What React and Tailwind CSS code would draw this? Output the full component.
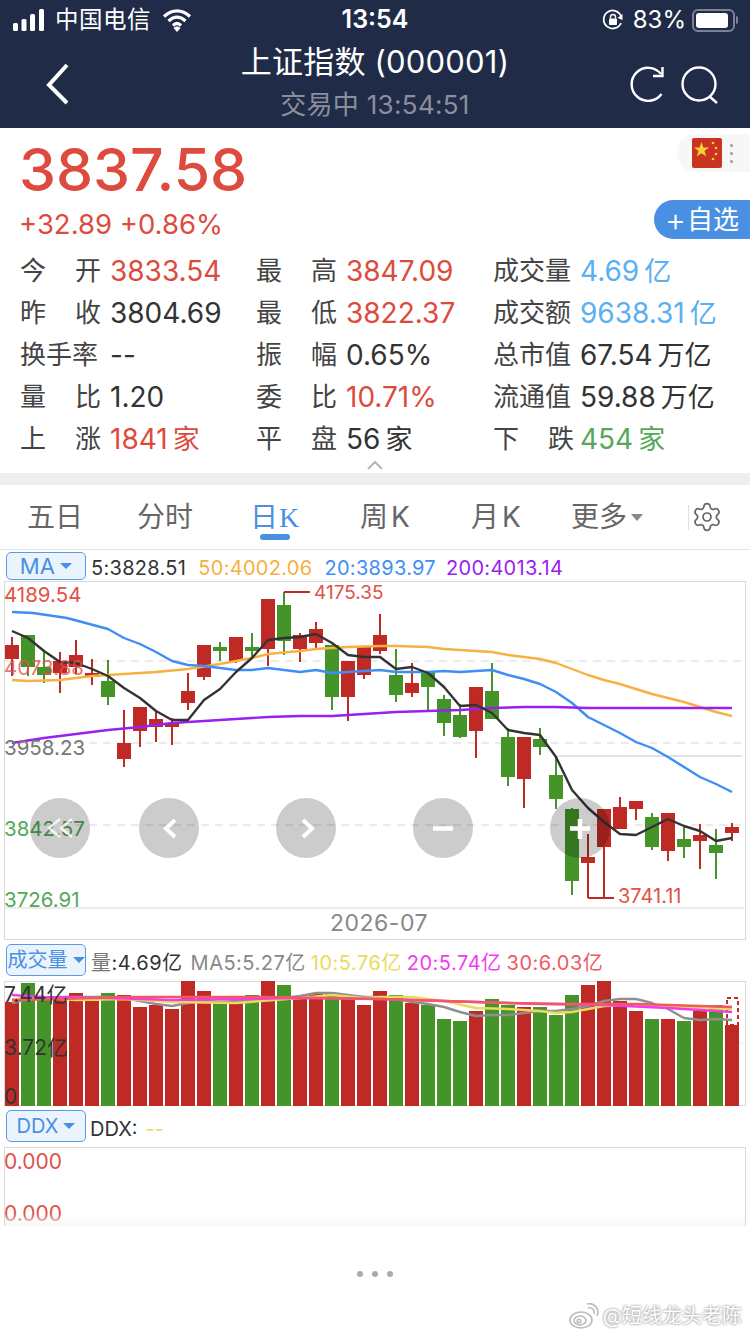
import { Settings } from 'lucide-react';

const RED = '#bf2a24';
const GREEN = '#45942a';

// [body top, body bottom, wick top, wick bottom, up?, volume bar top]
const candles = [
  [645, 659, 637, 676, 1, 1002], [635, 667, 635, 676, 0, 983], [667, 675, 650, 683, 0, 997],
  [661, 673, 652, 693, 1, 997], [655, 667, 640, 674, 1, 993], [673, 677, 659, 685, 1, 1001],
  [681, 697, 660, 705, 0, 993], [743, 759, 710, 767, 1, 995], [707, 731, 707, 747, 1, 1007],
  [719, 727, 711, 742, 1, 1005], [723, 727, 718, 745, 1, 1009], [691, 703, 673, 710, 1, 981],
  [645, 677, 645, 680, 1, 991], [647, 651, 642, 661, 0, 1002], [637, 661, 637, 663, 1, 1003],
  [647, 651, 633, 658, 0, 995], [599, 649, 599, 666, 1, 981], [605, 641, 592, 655, 0, 985],
  [635, 649, 633, 662, 1, 997], [629, 643, 622, 649, 1, 993], [645, 697, 645, 710, 0, 993],
  [661, 697, 661, 721, 1, 995], [647, 675, 647, 679, 1, 1005], [635, 651, 614, 654, 1, 991],
  [675, 695, 649, 702, 0, 995], [683, 693, 663, 697, 1, 1003], [671, 687, 671, 711, 0, 1005],
  [699, 723, 695, 736, 0, 1019], [715, 737, 704, 738, 0, 1021], [687, 731, 687, 758, 1, 1011],
  [691, 719, 663, 719, 0, 999], [737, 777, 728, 786, 0, 1005], [737, 779, 737, 808, 1, 1007],
  [739, 747, 728, 755, 0, 1007], [775, 799, 757, 809, 0, 1015], [809, 881, 808, 895, 0, 995],
  [857, 863, 834, 898, 1, 985], [809, 847, 809, 897, 1, 981], [807, 829, 797, 829, 1, 1001],
  [801, 809, 801, 820, 1, 1011], [817, 847, 813, 850, 0, 1019], [813, 851, 813, 861, 1, 1019],
  [839, 847, 825, 858, 0, 1021], [835, 841, 824, 869, 1, 1011], [845, 853, 829, 879, 0, 1005],
  [827, 833, 823, 841, 1, 1025],
];

const ma5 = '12,631 28,638 44,651 60,662 76,663 92,669 108,676 124,688 140,698 156,711 172,720 188,720 204,700 220,689 236,672 252,658 268,640 284,638 300,637 316,634 332,643 348,655 364,657 380,657 396,669 412,667 428,673 444,687 460,706 476,705 492,713 508,730 524,733 540,735 556,757 572,790 588,808 604,822 620,834 636,835 652,827 668,819 684,826 700,831 716,841 732,838';
const ma20 = '12,612 33,613 67,618 108,629 124,638 140,644 156,652 172,661 188,665 204,666 220,668 236,670 252,670 268,668 284,670 300,672 316,670 332,673 348,672 364,671 380,670 396,672 412,672 428,672 444,671 460,672 476,671 492,670 508,675 524,679 540,684 556,692 572,703 588,717 604,725 620,733 636,742 652,748 668,757 684,767 700,777 716,784 732,792';
const ma50 = '12,680 28,681 60,680 92,676 124,674 156,672 188,669 220,664 252,658 268,654 300,651 316,649 348,647 380,646 396,646 428,647 444,649 460,650 492,652 508,655 540,659 556,663 572,669 588,675 604,680 620,684 652,694 668,698 684,702 700,707 716,712 732,716';
const ma200 = '12,743 44,738 76,734 108,730 140,727 172,723 204,721 236,719 268,717 300,716 332,716 364,714 396,712 428,711 460,710 492,708 524,707 556,707 588,708 620,708 732,708';

const volGray = '12,1003 28,999 44,999 60,997 76,997 92,997 108,997 124,998 140,1001 156,1004 172,1006 188,1003 204,1001 220,1002 236,1001 252,1000 268,1000 284,998 300,996 316,993 332,993 348,995 364,997 380,997 396,999 412,1002 428,1004 444,1007 460,1012 476,1016 492,1015 508,1015 524,1013 540,1011 556,1011 572,1009 588,1006 604,1001 620,999 636,999 652,1003 668,1009 684,1018 700,1020 716,1019 732,1020';
const volYellow = '12,999 44,998 76,1000 124,999 172,1002 236,1003 300,998 332,995 364,998 380,997 412,997 444,1001 476,1008 508,1009 540,1011 556,1013 572,1012 604,1006 636,1005 668,1007 732,1009';
const volPink = '12,995 44,997 108,998 172,1000 236,999 300,998 380,999 412,1000 476,1002 540,1004 604,1005 668,1008 732,1012';
const volSalmon = '12,1000 60,999 124,997 204,997 268,997 380,999 444,1001 508,1003 572,1004 636,1004 700,1006 732,1007';

const stats = [
  [['今', '开'], '3833.54', '', 'text-[#dd4b3e]'],
  [['最', '高'], '3847.09', '', 'text-[#dd4b3e]'],
  [['成交量'], '4.69', '亿', 'text-[#5ab0f0]'],
  [['昨', '收'], '3804.69', '', 'text-[#333]'],
  [['最', '低'], '3822.37', '', 'text-[#dd4b3e]'],
  [['成交额'], '9638.31', '亿', 'text-[#5ab0f0]'],
  [['换手率'], '--', '', 'text-[#333]'],
  [['振', '幅'], '0.65%', '', 'text-[#333]'],
  [['总市值'], '67.54', '万亿', 'text-[#333]'],
  [['量', '比'], '1.20', '', 'text-[#333]'],
  [['委', '比'], '10.71%', '', 'text-[#dd4b3e]'],
  [['流通值'], '59.88', '万亿', 'text-[#333]'],
  [['上', '涨'], '1841', '家', 'text-[#dd4b3e]'],
  [['平', '盘'], '56', '家', 'text-[#333]'],
  [['下', '跌'], '454', '家', 'text-[#55a85a]'],
];

const Line = ({ points, color, width = 2.4 }) => (
  <polyline points={points} fill="none" stroke={color} strokeWidth={width} strokeLinejoin="round" />
);

const IndicatorButton = ({ label, textClass, heightClass }) => (
  <div className={`w-[80px] shrink-0 ${heightClass} flex items-center justify-center gap-[5px] border border-[#5a9be8] rounded-[5px] bg-[#ebf3fc] text-[#4a90e2]`}>
    <span className={textClass}>{label}</span>
    <span className="w-0 h-0 border-x-[6px] border-x-transparent border-t-[6px] border-t-[#4a90e2]" />
  </div>
);

const OverlayButton = ({ position, children }) => (
  <div className={`absolute ${position} top-[216px] w-[60px] h-[60px] rounded-full bg-[rgba(0,0,0,0.2)]`}>
    <svg width="60" height="60" viewBox="0 0 60 60" fill="none" stroke="#fff" strokeLinecap="butt">
      {children}
    </svg>
  </div>
);

export default function App() {
  return (
    <div className="w-[750px] h-[1334px] overflow-hidden bg-white font-['Inter','Noto_Sans_CJK_SC',sans-serif]">
      <header className="h-[128px] bg-[#1f2b47] text-white">
        <div className="relative h-[40px] flex items-center pl-[13px] pr-[12px]">
          <svg width="33" height="22" viewBox="0 0 33 22" fill="#fff">
            <rect x="0" y="14" width="5" height="8" rx="1.5" />
            <rect x="8.5" y="10" width="5" height="12" rx="1.5" />
            <rect x="17" y="5" width="5" height="17" rx="1.5" />
            <rect x="26" y="0" width="5" height="22" rx="1.5" />
          </svg>
          <span className="ml-[9px] text-[23.5px] tracking-[0.5px]">中国电信</span>
          <svg className="ml-[11px]" width="30" height="24" viewBox="0 0 30 24" fill="none" stroke="#fff" strokeWidth="3.2">
            <path d="M2 8.5 C10 1 20 1 28 8.5" />
            <path d="M6.5 13 C12 8 18 8 23.5 13" />
            <path d="M11 17.5 C13.5 15 16.5 15 19 17.5" />
            <path d="M15 24 L11.5 20 C13.5 18 16.5 18 18.5 20 Z" fill="#fff" stroke="none" />
          </svg>
          <span className="absolute left-0 right-0 text-center text-[25px] font-semibold">13:54</span>
          <svg className="ml-auto" width="22" height="22" viewBox="0 0 22 22" fill="none" stroke="#fff" strokeWidth="1.8">
            <path d="M19 14 A9 9 0 1 1 19 7" />
            <path d="M20.5 5 L20.5 11 L15.5 9 Z" fill="#fff" stroke="none" />
            <rect x="7" y="9.5" width="8" height="6.5" rx="1" fill="#fff" stroke="none" />
            <path d="M8.5 9.5 V8 a2.5 2.5 0 0 1 5 0 V9.5" strokeWidth="1.4" />
          </svg>
          <span className="ml-[9px] text-[24px]">83%</span>
          <div className="ml-[6px] w-[43px] h-[23px] border-2 border-[#7a8296] rounded-[6px] p-[2px]">
            <div className="w-[32px] h-full bg-white rounded-[3px]" />
          </div>
          <div className="ml-[1px] w-[2px] h-[8px] bg-[#7a8296] rounded-r" />
        </div>
        <div className="relative h-[88px] text-center">
          <div className="pt-[2px] text-[31px] leading-[40px] tracking-[0.2px]">上证指数 (000001)</div>
          <div className="mt-[5px] text-[26px] leading-[36px] tracking-[0.3px] text-[#8b8f9b]">交易中 13:54:51</div>
          <svg className="absolute left-[42px] top-[20px]" width="30" height="46" viewBox="0 0 30 46" fill="none" stroke="#fff" strokeWidth="4">
            <path d="M25 5 L7 25 L25 43" />
          </svg>
          <svg className="absolute left-[629px] top-[26px]" width="36" height="38" viewBox="0 0 36 38" fill="none" stroke="#fff" strokeWidth="2.4">
            <path d="M32 8 A16.5 16.5 0 1 0 32.5 28" />
            <path d="M33.5 1 V10 H24" />
          </svg>
          <svg className="absolute left-[681px] top-[26px]" width="38" height="38" viewBox="0 0 38 38" fill="none" stroke="#fff" strokeWidth="2.4">
            <circle cx="18" cy="18" r="16.5" />
            <path d="M28 30 L36 37" />
          </svg>
        </div>
      </header>

      <section className="relative h-[122px] pl-[19px] text-[#dd4b3e]">
        <div className="pt-[12px] text-[59px] leading-[60px] font-medium">3837.58</div>
        <div className="mt-[2px] text-[27.5px] leading-[44px]">+32.89 +0.86%</div>
        <div className="absolute right-0 top-[6px] w-[73px] h-[38px] flex items-center gap-[4px] pl-[15px] rounded-l-[19px] bg-[#f7f7f7]">
          <svg width="30" height="30" viewBox="0 0 30 30">
            <rect width="30" height="30" rx="2" fill="#c9331f" />
            <path d="M9.5 4 L11.4 9.6 L17 9.6 L12.4 13 L14.2 18.6 L9.5 15.2 L4.8 18.6 L6.6 13 L2 9.6 L7.6 9.6 Z" fill="#f7d038" />
            <circle cx="21" cy="5" r="1.3" fill="#f7d038" />
            <circle cx="24" cy="10" r="1.3" fill="#f7d038" />
            <circle cx="24" cy="16" r="1.3" fill="#f7d038" />
            <circle cx="21" cy="21" r="1.3" fill="#f7d038" />
          </svg>
          <div className="ml-[4px] flex flex-col gap-[5px]">
            <span className="w-[3px] h-[3px] rounded-full bg-[#999]" />
            <span className="w-[3px] h-[3px] rounded-full bg-[#999]" />
            <span className="w-[3px] h-[3px] rounded-full bg-[#999]" />
          </div>
        </div>
        <div className="absolute right-0 top-[72px] w-[96px] h-[39px] flex items-center justify-end pr-[11px] rounded-l-[20px] bg-[#4a90e2] text-white text-[26px]">
          <span className="text-[32px] leading-[32px] mr-[1px] font-light">+</span>自选
        </div>
      </section>

      <section className="grid grid-cols-[236px_237px_1fr] pl-[20px] text-[26px] leading-[42px] text-[#444]">
        {stats.map(([label, value, unit, color], i) => (
          <div key={label.join('')} className="flex items-center h-[42px]">
            <div className="w-[81px] flex justify-between">
              {label.map(ch => <span key={ch}>{ch}</span>)}
            </div>
            <span className={`${i % 3 === 0 ? 'ml-[9px]' : i % 3 === 1 ? 'ml-[9px]' : 'ml-[6px]'} text-[28px] whitespace-nowrap ${color}`}>
              {value}
              {unit && <span className="ml-[5px] text-[27px]">{unit}</span>}
            </span>
          </div>
        ))}
      </section>

      <div className="h-[13px] flex justify-center">
        <svg width="18" height="10" viewBox="0 0 18 10" fill="none" stroke="#b5b5b5" strokeWidth="2">
          <path d="M2 9 L9 2 L16 9" />
        </svg>
      </div>
      <div className="h-[12px] bg-[#efefef]" />

      <nav className="h-[65px] flex items-center border-b border-[#e5e5e5] text-[28px] text-[#666]">
        <div className="w-[110px] pl-[27px]">五日</div>
        <div className="w-[140px] pl-[27px]">分时</div>
        <div className="relative w-[110px] text-[#4a90e2] tracking-[1px]">
          日<span className="font-['Liberation_Serif',serif]">K</span>
          <div className="absolute left-[10px] top-[38px] w-[30px] h-[6px] rounded-full bg-[#4a90e2]" />
        </div>
        <div className="w-[111px] tracking-[3px]">周K</div>
        <div className="w-[100px] tracking-[3px]">月K</div>
        <div className="flex items-center w-[120px]">
          更多
          <span className="ml-[4px] w-0 h-0 border-x-[6px] border-x-transparent border-t-[7px] border-t-[#888]" />
          <div className="ml-[45px] h-[25px] w-px bg-[#e0e0e0]" />
        </div>
        <Settings size={32} strokeWidth={1.3} className="text-[#666]" />
      </nav>

      <div className="h-[31px] flex items-start pl-[6px] pt-[2px] text-[20px] leading-[32px] tracking-[0.3px]">
        <IndicatorButton label="MA" textClass="text-[22px]" heightClass="h-[28px]" />
        <span className="ml-[5px] text-[#333]">5:3828.51</span>
        <span className="ml-[12px] text-[#f5b041]">50:4002.06</span>
        <span className="ml-[12px] text-[#3f8ef5]">20:3893.97</span>
        <span className="ml-[10px] text-[#9a20f0]">200:4013.14</span>
      </div>

      {/* K-line panel */}
      <div className="relative h-[359px] mx-[4px] border border-[#d9d9d9] text-[20px] leading-[24px]">
        <svg className="absolute left-[-5px] top-[-1px]" width="750" height="359" viewBox="0 581 750 359">
          {[661, 743, 825].map(y => (
            <line key={y} x1="5" y1={y} x2="744" y2={y} stroke="#d8d8d8" strokeWidth="1" strokeDasharray="8 6" />
          ))}
          <line x1="557" y1="756" x2="742" y2="756" stroke="#dfe2e6" strokeWidth="2" />
          {candles.map(([top, bottom, wickTop, wickBottom, up], i) => {
            const cx = 12 + 16 * i;
            const color = up ? RED : GREEN;
            return (
              <g key={i} fill={color}>
                <rect x={cx - 1} y={wickTop} width="2" height={wickBottom - wickTop} />
                <rect x={cx - 7} y={top} width="14" height={bottom - top} />
              </g>
            );
          })}
          <path d="M284 592 H310" stroke={RED} strokeWidth="2" />
          <path d="M588 898 H614" stroke={RED} strokeWidth="2" />
          <Line points={ma50} color="#f7b140" />
          <Line points={ma20} color="#3f8ef5" />
          <Line points={ma200} color="#9a20f0" />
          <Line points={ma5} color="#333" />
          <line x1="5" y1="908" x2="744" y2="908" stroke="#ececec" strokeWidth="2" />
        </svg>
        <span className="absolute left-[-1px] top-[1px] text-[20.5px] text-[#e0524a]">4189.54</span>
        <span className="absolute left-[-1px] top-[74px] text-[20.5px] text-[#e0524a]/80">4073.88</span>
        <span className="absolute left-[-1px] top-[154px] text-[20.5px] text-[#777]">3958.23</span>
        <span className="absolute left-[-1px] top-[235px] text-[20.5px] text-[#55a85a]">3842.57</span>
        <span className="absolute left-[-1px] top-[306px] text-[20.5px] text-[#55a85a]">3726.91</span>
        <span className="absolute left-[309px] top-[-1px] text-[19px] text-[#e0524a]">4175.35</span>
        <span className="absolute left-[613px] top-[302px] text-[#e0524a]">3741.11</span>
        <div className="absolute left-[8px] right-0 top-[329px] text-center text-[23px] text-[#888] tracking-[0.5px]">2026-07</div>
        <OverlayButton position="left-[25px]">
          <path d="M30 21 L19 30 L30 39 M42 21 L31 30 L42 39" strokeWidth="2.5" opacity="0.8" />
        </OverlayButton>
        <OverlayButton position="left-[134px]">
          <path d="M36 22 L27 30.5 L36 39" strokeWidth="4" />
        </OverlayButton>
        <OverlayButton position="left-[271px]">
          <path d="M27 22 L36 30.5 L27 39" strokeWidth="4" />
        </OverlayButton>
        <OverlayButton position="left-[408px]">
          <path d="M20 30.5 H40" strokeWidth="4.5" />
        </OverlayButton>
        <OverlayButton position="left-[545px]">
          <path d="M20 30.5 H40 M30 21 V41" strokeWidth="4.5" />
        </OverlayButton>
      </div>

      <div className="h-[41px] flex items-start pl-[6px] pt-[4px] text-[20px] leading-[38px] tracking-[0.5px]">
        <IndicatorButton label="成交量" textClass="text-[20px] leading-[24px] tracking-normal" heightClass="h-[32px]" />
        <span className="ml-[5px] text-[#333]"><span className="text-[#777]">量</span>:4.69亿</span>
        <span className="ml-[8px] text-[#888]">MA5:5.27亿</span>
        <span className="ml-[5px] text-[#e8dc5a]">10:5.76亿</span>
        <span className="ml-[5px] text-[#f23bf0]">20:5.74亿</span>
        <span className="ml-[5px] text-[#f0595f]">30:6.03亿</span>
      </div>

      {/* volume panel */}
      <div className="relative h-[125px] mx-[4px] border border-[#d9d9d9] text-[20px] leading-[24px] text-[#333]">
        <svg className="absolute left-[-5px] top-[-1px]" width="750" height="125" viewBox="0 981 750 125">
          <line x1="5" y1="1043" x2="744" y2="1043" stroke="#eee" strokeWidth="1" />
          {candles.map(([, , , , up, barTop], i) => (
            <rect key={i} x={5 + 16 * i} y={barTop} width="14" height={1106 - barTop} fill={up ? RED : GREEN} />
          ))}
          <rect x="727" y="998" width="11" height="27" fill="#fff" stroke={RED} strokeWidth="2" strokeDasharray="4 3" />
          <Line points={volGray} color="#8f8f8f" />
          <Line points={volYellow} color="#e8dc5a" />
          <Line points={volPink} color="#f23bf0" />
          <Line points={volSalmon} color="#f0595f" />
        </svg>
        <span className="absolute left-[-1px] top-[1px] text-[21px]">7.44亿</span>
        <span className="absolute left-[-1px] top-[54px] text-[21px]">3.72亿</span>
        <span className="absolute left-[-1px] top-[103px] text-[21px]">0</span>
      </div>

      <div className="h-[41px] flex items-start pl-[6px] pt-[4px] text-[20px] leading-[38px]">
        <IndicatorButton label="DDX" textClass="text-[20px] leading-[24px]" heightClass="h-[32px]" />
        <span className="ml-[4px] text-[#333]">DDX:</span>
        <span className="ml-[8px] text-[#e8dc5a]">--</span>
      </div>

      <div className="relative h-[79px] mx-[4px] border-x border-t border-[#d9d9d9] text-[20px] leading-[24px] text-[#e0524a]">
        <span className="absolute left-[-1px] top-[2px] text-[21px]">0.000</span>
        <span className="absolute left-[-1px] top-[54px] text-[21px]">0.000</span>
        <div className="absolute left-0 right-0 bottom-0 h-[12px] bg-gradient-to-b from-transparent to-[#f7f7f7]" />
      </div>

      <div className="mt-[45px] flex justify-center gap-[9px]">
        <span className="w-[6px] h-[6px] rounded-full bg-[#aaa]" />
        <span className="w-[6px] h-[6px] rounded-full bg-[#aaa]" />
        <span className="w-[6px] h-[6px] rounded-full bg-[#aaa]" />
      </div>

      <div className="mt-[24px] pr-[8px] flex items-center justify-end gap-[4px]">
        <svg width="30" height="26" viewBox="0 0 30 26" fill="none" stroke="#bbb" strokeWidth="1.6">
          <ellipse cx="12" cy="17" rx="11" ry="8" />
          <ellipse cx="11" cy="17.5" rx="6" ry="4.5" />
          <circle cx="10" cy="18" r="1.8" />
          <path d="M19 5 C23 4 26 7 25 11" />
          <path d="M18 1 C25 -1 31 6 28 13" />
        </svg>
        <span className="text-[20px] text-white [text-shadow:0_0_2px_#999,0_0_3px_#aaa]">@短线龙头老陈</span>
      </div>
    </div>
  );
}
